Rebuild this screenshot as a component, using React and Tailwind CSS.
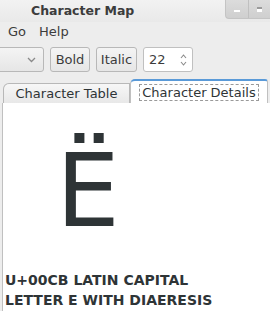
import React from "react";

export default function App() {
  const font = { fontFamily: '"DejaVu Sans", sans-serif' };
  return (
    <div className="w-[270px] h-[311px] overflow-hidden bg-[#ededed] text-[#2e3436] flex flex-col" style={font}>
      {/* title bar */}
      <div className="h-[22px] flex items-start relative bg-gradient-to-b from-[#f2f2f2] to-[#e9e9e9]">
        <div className="pl-[31px] pt-[2px] text-[12.5px] font-bold text-[#3c3c3c] leading-[18px]">Character Map</div>
        <div className="absolute right-0 top-0 w-[45px] h-[19px] flex bg-gradient-to-b from-[#dcdcdc] to-[#cfcfcf] rounded-bl-[4px] border-l border-b border-[#c4c4c4]">
          <div className="flex-1 flex items-center justify-center border-r border-[#c0c0c0]">
            <div className="w-[6px] h-[2px] bg-white mt-[3px]"></div>
          </div>
          <div className="flex-1 flex items-center justify-center">
            <div className="w-[5px] h-[5px] bg-white border-t-2 border-[#9a9a9a]"></div>
          </div>
        </div>
      </div>
      {/* menu bar */}
      <div className="h-[20px] flex items-center text-[13px] text-[#3c3c3c]">
        <span className="ml-[8px]">Go</span>
        <span className="ml-[13px]">Help</span>
      </div>
      {/* toolbar */}
      <div className="h-[35px] flex items-center text-[13px] text-[#3c3c3c]">
        <div className="w-[50px] h-[25px] ml-[-6px] rounded-[3px] border border-[#b8b8b8] bg-gradient-to-b from-[#f4f4f4] to-[#e6e6e6] flex items-center justify-end pr-[7px]">
          <svg width="9" height="6" viewBox="0 0 9 6"><path d="M1 1 L4.5 4.5 L8 1" fill="none" stroke="#8a8a8a" strokeWidth="1.3" /></svg>
        </div>
        <div className="ml-[6px] w-[40px] h-[25px] rounded-[3px] border border-[#b8b8b8] bg-gradient-to-b from-[#f4f4f4] to-[#e6e6e6] flex items-center justify-center">Bold</div>
        <div className="ml-[6px] w-[41px] h-[25px] rounded-[3px] border border-[#b8b8b8] bg-gradient-to-b from-[#f4f4f4] to-[#e6e6e6] flex items-center justify-center">Italic</div>
        <div className="ml-[6px] w-[50px] h-[25px] rounded-[3px] border border-[#c0c0c0] bg-white flex items-center justify-between pl-[5px] pr-[5px]">
          <span>22</span>
          <svg width="7" height="14" viewBox="0 0 7 14"><path d="M1 5 L3.5 2 L6 5 M1 9 L3.5 12 L6 9" fill="none" stroke="#8a8a8a" strokeWidth="1.1" /></svg>
        </div>
      </div>
      {/* tabs */}
      <div className="h-[26px] flex items-end pl-[3px] text-[13px] text-[#2e3436] relative">
        <div className="w-[127px] h-[20px] border border-b-0 border-[#b8b8b8] rounded-tl-[6px] bg-gradient-to-b from-[#f7f7f7] to-[#e8e8e8] flex items-center justify-center">
          Character Table
        </div>
        <div className="w-[138px] h-[24px] border border-b-0 border-[#c0c0c0] border-t-2 border-t-[#5a9ad8] rounded-tl-[5px] rounded-tr-[3px] bg-white flex items-center justify-center">
          <span className="border border-dashed border-[#9a9a9a] px-[2px] leading-[15px]">Character Details</span>
        </div>
      </div>
      {/* content */}
      <div className="flex-1 bg-white ml-[2px] border-l border-[#c0c0c0] flex flex-col">
        <div className="h-[167px] flex items-start">
          <div className="ml-[53px] mt-[28px] text-[101px] leading-[120px] text-[#2e3436]">Ë</div>
        </div>
        <div className="pl-[2px] text-[14px] font-bold leading-[20px] text-[#2e3436]">
          U+00CB LATIN CAPITAL<br />LETTER E WITH DIAERESIS
        </div>
      </div>
    </div>
  );
}
